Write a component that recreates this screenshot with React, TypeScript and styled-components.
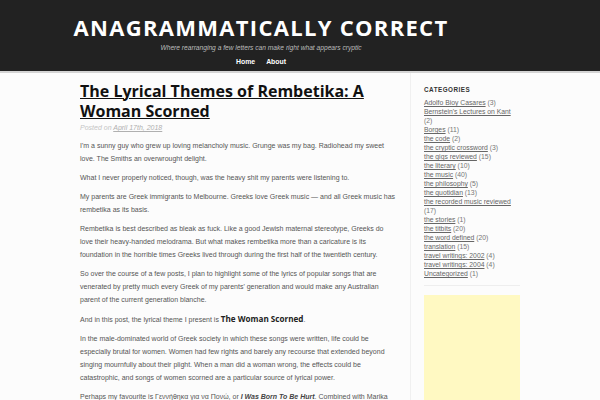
import React from "react";
import styled, { createGlobalStyle } from "styled-components";

const Global = createGlobalStyle`
  html, body { margin: 0; padding: 0; background: #fcfcfc; }
  body { font-family: "Liberation Sans", Arial, sans-serif; }
  * { box-sizing: border-box; }
`;

const Header = styled.header`
  background: #222222;
  border-bottom: 2px solid #d4d4d4;
  height: 73px;
  display: flex;
  flex-direction: column;
  align-items: center;
  padding: 14px 78px 0 0;
`;

const SiteTitle = styled.h1`
  margin: 0;
  color: #ffffff;
  font-family: "Open Sans", "Liberation Sans", sans-serif;
  font-weight: 700;
  font-size: 22px;
  line-height: 26px;
  letter-spacing: 1.3px;
  text-transform: uppercase;
`;

const Tagline = styled.p`
  margin: 3px 0 0;
  color: #bdbdbd;
  font-style: italic;
  font-size: 6.65px;
  line-height: 10px;
`;

const Nav = styled.nav`
  display: flex;
  gap: 11px;
  margin-top: 4px;
`;

const NavLink = styled.a`
  color: #ffffff;
  font-weight: 700;
  font-size: 6.9px;
  line-height: 10px;
  text-decoration: none;
`;

const Page = styled.div`
  width: 440px;
  margin: 0 auto;
  display: flex;
  align-items: stretch;
`;

const Main = styled.main`
  width: 316px;
  flex: none;
  margin-right: 14px;
  padding-top: 8px;
`;

const PostTitle = styled.h2`
  margin: 0;
  font-family: "Open Sans", "Liberation Sans", sans-serif;
  font-weight: 700;
  font-size: 16px;
  line-height: 20px;
  color: #111;
  text-decoration: underline;
  text-decoration-thickness: 1px;
  text-underline-offset: 1px;
`;

const Meta = styled.div`
  margin-top: 2px;
  margin-bottom: 6px;
  font-size: 7px;
  line-height: 10px;
  color: #c4c4c4;
  font-style: italic;
`;

const MetaLink = styled.a`
  color: #b0b0b0;
  text-decoration: underline;
`;

const Para = styled.p`
  margin: 0 0 6px;
  font-size: 7px;
  line-height: 13px;
  color: #555555;
`;

const Strong = styled.strong`
  font-family: "Open Sans", "Liberation Sans", sans-serif;
  font-size: 8.1px;
  color: #222;
`;

const Emph = styled.em`
  font-weight: 700;
  color: #444;
`;

const Sidebar = styled.aside`
  width: 110px;
  flex: none;
  border-left: 1px solid #f0f0f0;
  padding: 11px 0 0 13px;
  min-height: 327px;
`;

const WidgetTitle = styled.h3`
  margin: 0 0 2px;
  font-family: "Liberation Sans", Arial, sans-serif;
  font-size: 6.3px;
  line-height: 12px;
  font-weight: 700;
  letter-spacing: 0.5px;
  color: #333;
`;

const CatList = styled.ul`
  list-style: none;
  margin: 0;
  padding: 0 0 7px;
  width: 96px;
  border-bottom: 1px solid #eeeeee;
`;

const CatItem = styled.li`
  font-family: "Liberation Sans", Arial, sans-serif;
  font-size: 6.8px;
  line-height: 9px;
  color: #777;
  padding-right: 1px;
`;

const CatLink = styled.a`
  color: #666;
  text-decoration: underline;
`;

const Ad = styled.div`
  width: 96px;
  height: 120px;
  margin-top: 9px;
  background: #fff9c2;
`;

const cats: [string, number][] = [
  ["Adolfo Bioy Casares", 3],
  ["Bernstein's Lectures on Kant", 2],
  ["Borges", 11],
  ["the code", 2],
  ["the cryptic crossword", 3],
  ["the gigs reviewed", 15],
  ["the literary", 10],
  ["the music", 40],
  ["the philosophy", 5],
  ["the quotidian", 13],
  ["the recorded music reviewed", 17],
  ["the stories", 1],
  ["the titbits", 20],
  ["the word defined", 20],
  ["translation", 15],
  ["travel writings: 2002", 4],
  ["travel writings: 2004", 4],
  ["Uncategorized", 1],
];

export default function App() {
  return (
    <>
      <Global />
      <Header>
        <SiteTitle>Anagrammatically Correct</SiteTitle>
        <Tagline>Where rearranging a few letters can make right what appears cryptic</Tagline>
        <Nav>
          <NavLink href="#">Home</NavLink>
          <NavLink href="#">About</NavLink>
        </Nav>
      </Header>
      <Page>
        <Main>
          <PostTitle>The Lyrical Themes of Rembetika: A Woman Scorned</PostTitle>
          <Meta>
            Posted on <MetaLink href="#">April 17th, 2018</MetaLink>
          </Meta>
          <Para>
            I'm a sunny guy who grew up loving melancholy music. Grunge was my bag. Radiohead my sweet love. The Smiths an overwrought delight.
          </Para>
          <Para>What I never properly noticed, though, was the heavy shit my parents were listening to.</Para>
          <Para>
            My parents are Greek immigrants to Melbourne. Greeks love Greek music — and all Greek music has rembetika as its basis.
          </Para>
          <Para>
            Rembetika is best described as bleak as fuck. Like a good Jewish maternal stereotype, Greeks do love their heavy-handed melodrama. But what makes rembetika more than a caricature is its foundation in the horrible times Greeks lived through during the first half of the twentieth century.
          </Para>
          <Para>
            So over the course of a few posts, I plan to highlight some of the lyrics of popular songs that are venerated by pretty much every Greek of my parents' generation and would make any Australian parent of the current generation blanche.
          </Para>
          <Para>
            And in this post, the lyrical theme I present is <Strong>The Woman Scorned</Strong>.
          </Para>
          <Para>
            In the male-dominated world of Greek society in which these songs were written, life could be especially brutal for women. Women had few rights and barely any recourse that extended beyond singing mournfully about their plight. When a man did a woman wrong, the effects could be catastrophic, and songs of women scorned are a particular source of lyrical power.
          </Para>
          <Para>
            Perhaps my favourite is Γεννήθηκα για να Πονώ, or <Emph>I Was Born To Be Hurt</Emph>. Combined with Marika Ninou's fierce singing, the song stings with bitter resentment and a deep wish for vengeance. Here are the lyrics.
          </Para>
        </Main>
        <Sidebar>
          <WidgetTitle>CATEGORIES</WidgetTitle>
          <CatList>
            {cats.map(([name, n]) => (
              <CatItem key={name}>
                <CatLink href="#">{name}</CatLink> ({n})
              </CatItem>
            ))}
          </CatList>
          <Ad />
        </Sidebar>
      </Page>
    </>
  );
}
